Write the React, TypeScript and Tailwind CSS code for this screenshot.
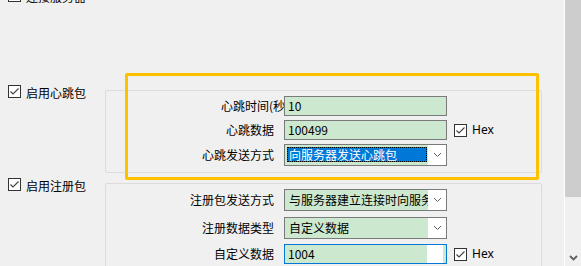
const cjk = "font-['Noto_Sans_CJK_SC','Noto_Sans',sans-serif]";

function CheckBox() {
  return (
    <span className="w-[13px] h-[13px] shrink-0 border border-[#333333] bg-white flex items-center justify-center">
      <svg width="11" height="11" viewBox="0 0 11 11">
        <path d="M1.5 5.5 L4 8 L9.5 2.5" stroke="#444" strokeWidth="1.2" fill="none" />
      </svg>
    </span>
  );
}

function Chevron({ color = '#606060', width = 1 }: { color?: string; width?: number }) {
  return (
    <svg width="9" height="6" viewBox="0 0 9 6">
      <path d="M1 1 L4.5 4.5 L8 1" stroke={color} strokeWidth={width} fill="none" />
    </svg>
  );
}

function Hex() {
  return (
    <div className="flex items-center ml-[7px] gap-[5px]">
      <CheckBox />
      <span className="font-['Noto_Sans',sans-serif] text-[12px] leading-none">Hex</span>
    </div>
  );
}

function TextBox({ value, focused = false, strip = false }: { value: string; focused?: boolean; strip?: boolean }) {
  return (
    <div
      className={
        'relative z-10 w-[163px] h-[20px] border bg-[#cce8cf] flex items-center pl-[3px] ' +
        (focused ? 'border-[#0078d7]' : 'border-[#7a7a7a]')
      }
    >
      <span className="flex-1 leading-none">{value}</span>
      {strip && <span className="self-stretch w-[16px] mr-[3px] bg-white" />}
    </div>
  );
}

function ComboBox({ value, selected = false }: { value: string; selected?: boolean }) {
  return (
    <div className="w-[163px] h-[22px] border border-[#7a7a7a] flex">
      <div className="flex-1 min-w-0 bg-[#cce8cf] flex overflow-hidden">
        {selected ? (
          <div className="flex-1 mt-[2px] mb-[3px] ml-[2px] mr-[1px] bg-[#0078d7] border border-dotted border-black text-white flex items-center pl-[1px] whitespace-nowrap overflow-hidden leading-none">
            {value}
          </div>
        ) : (
          <div className="flex-1 flex items-center pl-[4px] whitespace-nowrap overflow-hidden leading-none">{value}</div>
        )}
      </div>
      <div className="w-[18px] bg-white flex items-center justify-center">
        <Chevron />
      </div>
    </div>
  );
}

function Row({ label, children, labelShift = false }: { label: string; children: React.ReactNode; labelShift?: boolean }) {
  return (
    <div className="flex items-center">
      <div className="w-[168px] flex justify-end mr-[10px] whitespace-nowrap">
        <span className={labelShift ? 'mr-[-15px]' : ''}>{label}</span>
      </div>
      {children}
    </div>
  );
}

export default function App() {
  return (
    <div className={`w-[581px] h-[266px] overflow-hidden bg-[#f0f0f0] flex text-[12px] text-black ${cjk}`}>
      <div className="relative flex-1 flex flex-col">
        {/* partly scrolled out row */}
        <div className="mt-[-11px] h-[13px] flex items-center gap-[5px] pl-[8px]">
          <CheckBox />
          <span className="leading-none pt-[3px]">连接服务器</span>
        </div>

        {/* heartbeat */}
        <div className="mt-[83px] flex items-start">
          <div className="w-[105px] h-[13px] flex items-center gap-[5px] pl-[8px]">
            <CheckBox />
            <span className="leading-none pt-[3px] whitespace-nowrap">启用心跳包</span>
          </div>
          <div className="mt-[5px] w-[437px] border border-[#dcdcdc] rounded-[2px] pt-[5px] pb-[6px] flex flex-col gap-[4px]">
            <Row label="心跳时间(秒)" labelShift>
              <TextBox value="10" />
            </Row>
            <Row label="心跳数据">
              <TextBox value="100499" />
              <Hex />
            </Row>
            <Row label="心跳发送方式">
              <ComboBox value="向服务器发送心跳包" selected />
            </Row>
          </div>
        </div>

        {/* register */}
        <div className="mt-[5px] flex items-start">
          <div className="w-[105px] h-[13px] flex items-center gap-[5px] pl-[8px]">
            <CheckBox />
            <span className="leading-none pt-[3px] whitespace-nowrap">启用注册包</span>
          </div>
          <div className="mt-[5px] w-[437px] border border-[#dcdcdc] rounded-[2px] pt-[5px] pb-[20px] flex flex-col">
            <Row label="注册包发送方式">
              <ComboBox value="与服务器建立连接时向服务器发送注册包" />
            </Row>
            <div className="mt-[6px]">
              <Row label="注册数据类型">
                <ComboBox value="自定义数据" />
              </Row>
            </div>
            <div className="mt-[5px]">
              <Row label="自定义数据">
                <TextBox value="1004" focused strip />
                <Hex />
              </Row>
            </div>
          </div>
        </div>

        {/* highlight frame */}
        <div className="absolute left-[125px] top-[73px] w-[414px] h-[107px] border-[3px] border-[#ffc000] rounded-[2px] pointer-events-none" />
      </div>

      {/* scrollbar */}
      <div className="w-[17px] border-l border-white flex flex-col">
        <div className="h-[197px] bg-[#cdcdcd]" />
        <div className="flex-1 bg-[#f0f0f0] flex flex-col justify-end">
          <div className="h-[17px] flex items-center justify-center">
            <Chevron color="#606060" width={1.8} />
          </div>
        </div>
      </div>
    </div>
  );
}
